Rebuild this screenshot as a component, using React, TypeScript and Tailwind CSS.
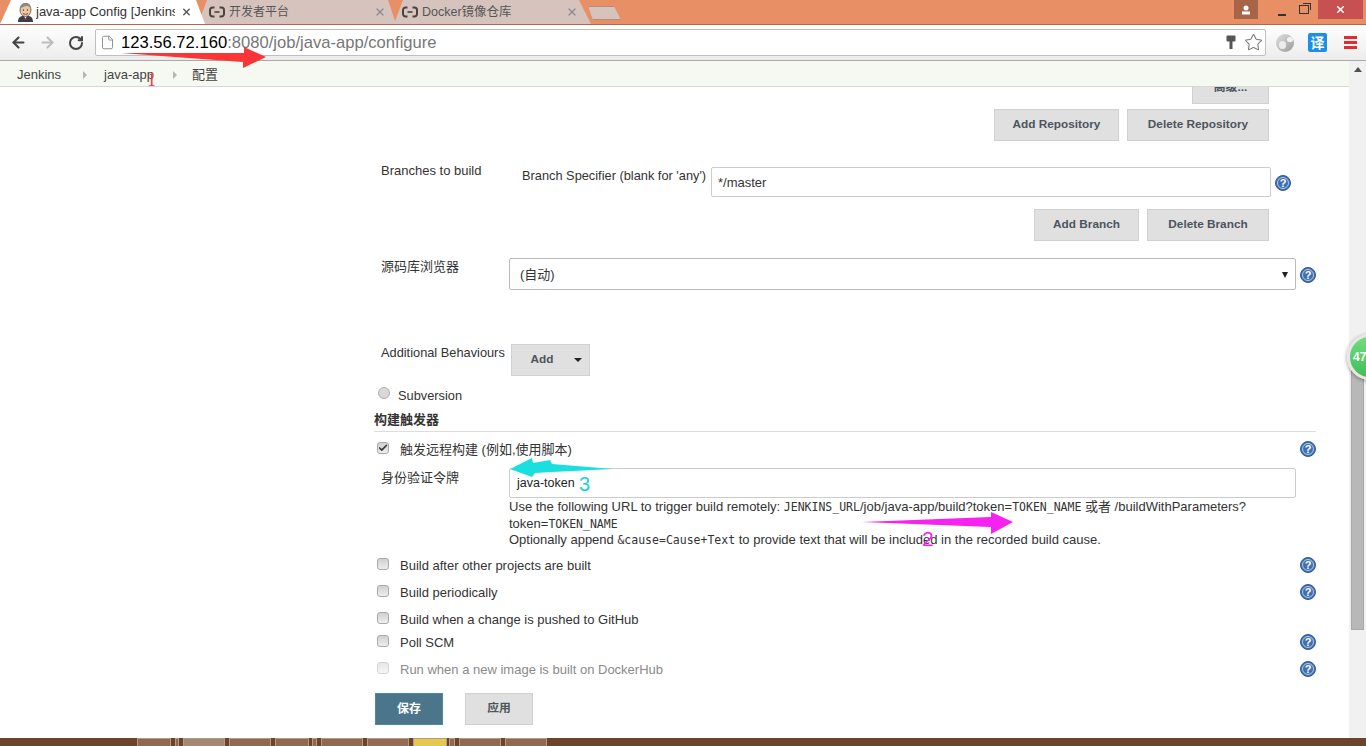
import { ArrowLeft, ArrowRight, RotateCw, File, Star, X, Check } from "lucide-react";
import type { ReactNode } from "react";

const SANS = "font-['Liberation_Sans','Noto_Sans_CJK_SC',sans-serif]";

function CloudLogo() {
  return (
    <svg width="16" height="12" viewBox="0 0 16 12" className="shrink-0">
      <path d="M5.500 1.500H3.500A2.500 2.500 0 0 0 1 4v4a2.500 2.500 0 0 0 2.500 2.500h2M10.500 1.500h2A2.500 2.500 0 0 1 15 4v4a2.500 2.500 0 0 1-2.500 2.500h-2" fill="none" stroke="#4a4440" strokeWidth="2" />
      <rect x="5.500" y="5.200" width="5" height="1.600" fill="#4a4440" />
    </svg>
  );
}

function JenkinsLogo() {
  return (
    <svg width="17" height="20" viewBox="0 0 17 20" className="shrink-0">
      <path d="M1 20c0-4 2-6 5-6h5c3 0 5 2 5 6z" fill="#3d3d4a" />
      <path d="M7 14h3l-1.500 3z" fill="#fff" />
      <path d="M7 17l1.500-1 1.500 1-1.500 1z" fill="#c0392b" />
      <ellipse cx="8.500" cy="8" rx="5.500" ry="6.500" fill="#eec5a5" stroke="#6b4a35" strokeWidth="0.800" />
      <path d="M3 7C3 2 6 1 9 1s5 2 5 6c-1-2-2-3-4-3S5 5 3 7z" fill="#8b8782" />
      <path d="M6 11.500c1.500 1 3.500 1 5 0" stroke="#8a4a3a" fill="none" strokeWidth="1" />
      <circle cx="6.500" cy="8" r="0.700" fill="#333" />
      <circle cx="10.500" cy="8" r="0.700" fill="#333" />
    </svg>
  );
}

function Help({ className = "" }: { className?: string }) {
  return (
    <span className={`flex h-4 w-4 shrink-0 items-center justify-center rounded-full border border-[#2d5c9e] bg-[#3f6fb0] text-[11px] font-bold leading-none text-white outline outline-1 -outline-offset-3 outline-[#b9cbe3] ${className}`}>
      ?
    </span>
  );
}

function Btn({ children, className = "" }: { children: ReactNode; className?: string }) {
  return (
    <div className={`flex h-8 items-center justify-center border border-[#d1d1d1] bg-[#e0e0e0] text-[11.800px] font-bold text-[#4d545d] ${className}`}>
      {children}
    </div>
  );
}

function Box({ checked = false, faded = false }: { checked?: boolean; faded?: boolean }) {
  return (
    <span className={`flex h-3 w-3 items-center justify-center rounded-[3px] border border-[#a9a9a9] bg-gradient-to-b from-[#d0d0d0] to-[#eeeeee] ${faded ? "opacity-50" : ""}`}>
      {checked && <Check size={10} strokeWidth={4} className="text-[#333]" />}
    </span>
  );
}

function CheckRow({ label, mt, help, faded }: { label: string; mt: string; help?: boolean; faded?: boolean }) {
  return (
    <div className={`flex h-5 items-center ${mt}`}>
      <span className="ml-[3px] -mt-[4px]">
        <Box faded={faded} />
      </span>
      <span className={`ml-[11px] ${faded ? "text-[#8a8a8a]" : "text-[#333]"}`}>{label}</span>
      {help && <Help className="ml-auto -mt-[2px]" />}
    </div>
  );
}

function Caret() {
  return <span className="block h-0 w-0 border-y-[4px] border-l-[4px] border-y-transparent border-l-[#b5b5b5]" />;
}

const taskButtons = [
  ["w-[34px]", "bg-[#8f6a52]"],
  ["w-[4px] ml-[4px]", "bg-[#8f6a52]"],
  ["w-[42px] ml-[4px]", "bg-[#a58873]"],
  ["w-[42px] ml-[4px]", "bg-[#8f6a52]"],
  ["w-[34px] ml-[4px]", "bg-[#8f6a52]"],
  ["w-[5px] ml-[3px]", "bg-[#8f6a52]"],
  ["w-[42px] ml-[4px]", "bg-[#8f6a52]"],
  ["w-[42px] ml-[4px]", "bg-[#936d53]"],
  ["w-[34px] ml-[4px]", "bg-[#e4c94e]"],
  ["w-[6px] ml-[2px]", "bg-[#8f6a52]"],
  ["w-[42px] ml-[4px]", "bg-[#8f6a52]"],
  ["w-[42px] ml-[4px]", "bg-[#8f6a52]"],
];

const MONO = "font-['DejaVu_Sans_Mono',monospace] text-[11.500px]";

export default function App() {
  return (
    <div className={`relative flex h-[746px] w-full flex-col overflow-hidden bg-white ${SANS}`}>
      {/* Title bar with tabs */}
      <div className="relative flex h-[25px] shrink-0 items-end border-b border-[#b0694a] bg-[#e98f66]">
        <div className="z-10 flex h-[24px] w-[205px] items-center bg-white pl-[17px] pr-[13px] [clip-path:polygon(0_100%,11px_0,196px_0,100%_100%)]">
          <JenkinsLogo />
          <span className="ml-[2px] w-[139px] shrink-0 overflow-hidden whitespace-nowrap text-[13px] text-[#333]">java-app Config [Jenkins</span>
          <X size={12} strokeWidth={3} className="ml-[6px] text-[#555]" />
        </div>
        <div className="-ml-[7px] flex h-[24px] w-[198px] items-center bg-[#d6c3bd] pl-[11px] pr-[10px] [clip-path:polygon(0_100%,9px_0,190px_0,100%_100%)]">
          <CloudLogo />
          <span className="ml-[4px] flex-1 text-[12px] text-[#555]">开发者平台</span>
          <X size={12} strokeWidth={2.500} className="text-[#8a8a8a]" />
        </div>
        <div className="-ml-[2px] flex h-[24px] w-[197px] items-center bg-[#d6c3bd] pl-[8px] pr-[13px] [clip-path:polygon(0_100%,9px_0,185px_0,100%_100%)]">
          <CloudLogo />
          <span className="ml-[4px] flex-1 text-[12.500px] text-[#555]">Docker镜像仓库</span>
          <X size={12} strokeWidth={2.500} className="text-[#8a8a8a]" />
        </div>
        <div className="mb-[4px] ml-[-3px] h-[14px] w-[33px] border border-[#b58d7d] bg-[#d6c3bd] [clip-path:polygon(0_0,26px_0,100%_100%,5px_100%)]" />
        <div className="absolute right-[3px] top-0 flex h-[19px] items-start">
          <div className="mr-[20px] flex h-[19px] w-[24px] items-center justify-center bg-[#a66548]">
            <svg width="10" height="10" viewBox="0 0 10 10"><circle cx="5" cy="3" r="2.500" fill="#fff" /><rect x="1" y="6.500" width="8" height="3" fill="#fff" /></svg>
          </div>
          <div className="mr-[7px] flex h-[19px] w-[14px] items-end pb-[3px]">
            <div className="h-[2px] w-[8px] bg-[#333]" />
          </div>
          <div className="relative mr-[5px] mt-[5px] h-[9px] w-[10px] border-[1.500px] border-[#333]">
            <div className="absolute -right-[3px] -top-[3px] h-[7px] w-[8px] border-r border-t border-[#333]" />
          </div>
          <div className="ml-[4px] flex h-[19px] w-[45px] items-center justify-center bg-[#c75050]">
            <X size={11} strokeWidth={3.500} className="text-white" />
          </div>
        </div>
      </div>

      {/* Toolbar */}
      <div className="flex h-[36px] shrink-0 items-center border-b border-[#a9a9a9] bg-gradient-to-b from-white to-[#ececec] pl-[10px]">
        <ArrowLeft size={17} strokeWidth={3} className="text-[#444]" />
        <ArrowRight size={17} strokeWidth={3} className="ml-[12px] text-[#bdbdbd]" />
        <RotateCw size={16} strokeWidth={3} className="ml-[12px] -mr-[1px] text-[#444]" />
        <div className="ml-[12px] flex h-[27px] w-[1171px] items-center rounded-[2px] border border-[#bfbfbf] bg-white pl-[4px]">
          <File size={15} strokeWidth={1.500} className="text-[#8a8a8a]" />
          <span className="ml-[6px] pt-[2px] text-[16.600px] text-[#777]">
            <span className="text-black">123.56.72.160</span>:8080/job/java-app/configure
          </span>
          <svg width="10" height="15" viewBox="0 0 10 15" className="ml-auto">
            <rect x="0.500" y="0.500" width="9" height="6" rx="1" fill="#555" />
            <rect x="3.500" y="6" width="3" height="8" fill="#555" />
          </svg>
          <Star size={19} strokeWidth={1.300} className="ml-[8px] mr-[2px] text-[#777]" />
        </div>
        <div className="relative ml-[10px] h-[18px] w-[18px] overflow-hidden rounded-full bg-gradient-to-br from-[#e2e2e2] to-[#9a9a9a]">
          <div className="absolute left-[3px] top-[7px] h-[8px] w-[7px] rounded-full bg-[#ececec]" />
          <div className="absolute right-[1px] top-[3px] h-[5px] w-[6px] rounded-full bg-[#f2f2f2]" />
        </div>
        <div className="ml-[14px] flex h-[19px] w-[19px] items-center justify-center rounded-[2px] bg-[#1e8fe6] text-[14px] font-bold leading-none text-white">译</div>
        <div className="ml-[17px] flex w-[13px] flex-col gap-[2px]">
          <div className="h-[3px] bg-[#e02e2e]" />
          <div className="h-[3px] bg-[#e02e2e]" />
          <div className="h-[3px] bg-[#e02e2e]" />
        </div>
      </div>

      <div className="flex min-h-0 flex-1">
        <div className="flex min-w-0 flex-1 flex-col">
          {/* Breadcrumb */}
          <div className="flex h-[26px] shrink-0 items-center border-b border-[#d8d8d8] bg-[#f6f8f2] pl-[17px] pt-[2px] text-[13px] text-[#444]">
            <span>Jenkins</span>
            <span className="ml-[22px]"><Caret /></span>
            <span className="ml-[17px]">java-app</span>
            <span className="ml-[19px]"><Caret /></span>
            <span className="ml-[15px]">配置</span>
          </div>

          {/* Form */}
          <div className="flex min-h-0 flex-1 flex-col overflow-hidden pl-[374px] pr-[33px] text-[13px] text-[#333]">
            <div className="flex h-[17px] shrink-0 items-end justify-end pr-[47px]">
              <Btn className="w-[77px] shrink-0">高级...</Btn>
            </div>

            <div className="mt-[5px] flex justify-end gap-2 pr-[47px]">
              <Btn className="w-[125px]">Add Repository</Btn>
              <Btn className="w-[142px]">Delete Repository</Btn>
            </div>

            <div className="mt-[26px] flex h-[30px]">
              <span className="ml-[7px] -mt-[6px] w-[141px]">Branches to build</span>
              <span className="-mt-[1px] w-[189px] text-[12.800px]">Branch Specifier (blank for 'any')</span>
              <div className="flex h-[30px] w-[560px] items-center rounded-[2px] border border-[#ccc] pl-[6px] pt-[2px]">*/master</div>
              <Help className="ml-[4px] mt-[8px]" />
            </div>

            <div className="mt-[12px] flex justify-end gap-2 pr-[47px]">
              <Btn className="w-[105px]">Add Branch</Btn>
              <Btn className="w-[122px]">Delete Branch</Btn>
            </div>

            <div className="mt-[17px] flex h-8">
              <span className="ml-[7px] -mt-[1px] w-[128px]">源码库浏览器</span>
              <div className="flex h-8 w-[787px] items-center justify-between rounded-[2px] border border-[#bbb] pl-[10px] pr-[7px] pt-[1px]">
                <span>(自动)</span>
                <span className="h-0 w-0 border-x-[3.500px] border-t-[6px] border-x-transparent border-t-[#222]" />
              </div>
              <Help className="ml-[4px] mt-[9px]" />
            </div>

            <div className="mt-[54px] flex h-8">
              <span className="ml-[7px] -mt-[1px] w-[130px] text-[12.800px]">Additional Behaviours</span>
              <Btn className="w-[79px] gap-[21px] pl-[12px]">
                Add
                <span className="h-0 w-0 border-x-[4px] border-t-[4px] border-x-transparent border-t-[#222]" />
              </Btn>
            </div>

            <div className="mt-[9px] flex h-5 items-center">
              <span className="ml-[4px] -mt-[4px] h-3 w-3 rounded-full border border-[#b0b0b0] bg-[#d9d9d9]" />
              <span className="ml-[8px] pt-[1px] text-[12.800px]">Subversion</span>
            </div>

            <div className="mt-[5px] h-[22px] border-b border-[#ddd] text-[13px] font-bold leading-5">构建触发器</div>

            <div className="mt-[7px] flex h-5 items-center">
              <span className="ml-[3px] -mt-[2px]"><Box checked /></span>
              <span className="ml-[11px] pt-[1px]">触发远程构建 (例如,使用脚本)</span>
              <Help className="ml-auto" />
            </div>

            <div className="mt-[9px] flex h-[30px]">
              <span className="ml-[7px] w-[128px]">身份验证令牌</span>
              <div className="flex h-[30px] w-[787px] items-center rounded-[2px] border border-[#ccc] pl-[7px] pt-[1px] text-[12.500px] text-[#222]">java-token</div>
            </div>

            <div className="ml-[135px] h-[47px] shrink-0 pt-[1px] leading-[15.500px] text-[#333]">
              Use the following URL to trigger build remotely: <span className={MONO}>JENKINS_URL</span>/job/java-app/build?token=<span className={MONO}>TOKEN_NAME</span> 或者 /buildWithParameters?
              <br />
              token=<span className={MONO}>TOKEN_NAME</span>
              <br />
              Optionally append <span className={MONO}>&amp;cause=Cause+Text</span> to provide text that will be included in the recorded build cause.
            </div>

            <CheckRow mt="mt-[11px]" label="Build after other projects are built" help />
            <CheckRow mt="mt-[7px]" label="Build periodically" help />
            <CheckRow mt="mt-[7px]" label="Build when a change is pushed to GitHub" />
            <CheckRow mt="mt-[3px]" label="Poll SCM" help />
            <CheckRow mt="mt-[7px]" label="Run when a new image is built on DockerHub" help faded />

            <div className="mt-[13px] flex gap-[22px] pl-[1px]">
              <div className="flex h-8 w-[68px] items-center justify-center border border-[#4b8aa5] bg-[#4b758b] text-xs font-bold text-white">保存</div>
              <Btn className="w-[68px]">应用</Btn>
            </div>
          </div>
        </div>

        {/* Scrollbar */}
        <div className="flex w-[17px] shrink-0 flex-col items-center bg-[#f1f1f1] pt-[6px]">
          <span className="h-0 w-0 border-x-[4px] border-b-[5px] border-x-transparent border-b-[#505050]" />
          <div className="mt-[284px] h-[274px] w-[13px] border border-[#a8a8a8] bg-[#b8b8b8]" />
        </div>
      </div>

      {/* Taskbar */}
      <div className="flex h-2 shrink-0 bg-[#6b452b] pl-[137px]">
        {taskButtons.map(([w, c], i) => (
          <div key={i} className={`h-2 border-l border-r border-t border-[#b59a86] ${w} ${c}`} />
        ))}
      </div>

      {/* Floating badge */}
      <div className="absolute left-[1347px] top-[334px] flex h-[46px] w-[46px] items-center rounded-full border-[3px] border-[#e6e6e6] bg-gradient-to-b from-[#6fdc7e] to-[#3fbf55] pl-[3px] text-[12px] font-bold text-white shadow-[0_1px_4px_rgba(0,0,0,0.4)]">
        47
      </div>

      {/* Screenshot annotations */}
      <svg width="1366" height="746" className="pointer-events-none absolute left-0 top-0">
        <polygon points="121,53 244,53 244,47 266,57 243,68 243,62" fill="#fb3438" />
        <polygon points="510,469 532,458 533,463 550,460 552,464 613,469 552,472 535,473 532,477" fill="#1adfdf" />
        <polygon points="862,522 991,517 991,512 1013,522 991,534 991,527" fill="#f522f0" />
      </svg>
      <span className="pointer-events-none absolute left-[147px] top-[71px] font-['Liberation_Serif',serif] text-[18px] leading-[18px] text-[#f03a3a]">1</span>
      <span className="pointer-events-none absolute left-[922px] top-[529px] text-[21px] leading-5 text-[#f522f0]">2</span>
      <span className="pointer-events-none absolute left-[579px] top-[474px] text-[20px] leading-5 text-[#1cd0d8]">3</span>
    </div>
  );
}
